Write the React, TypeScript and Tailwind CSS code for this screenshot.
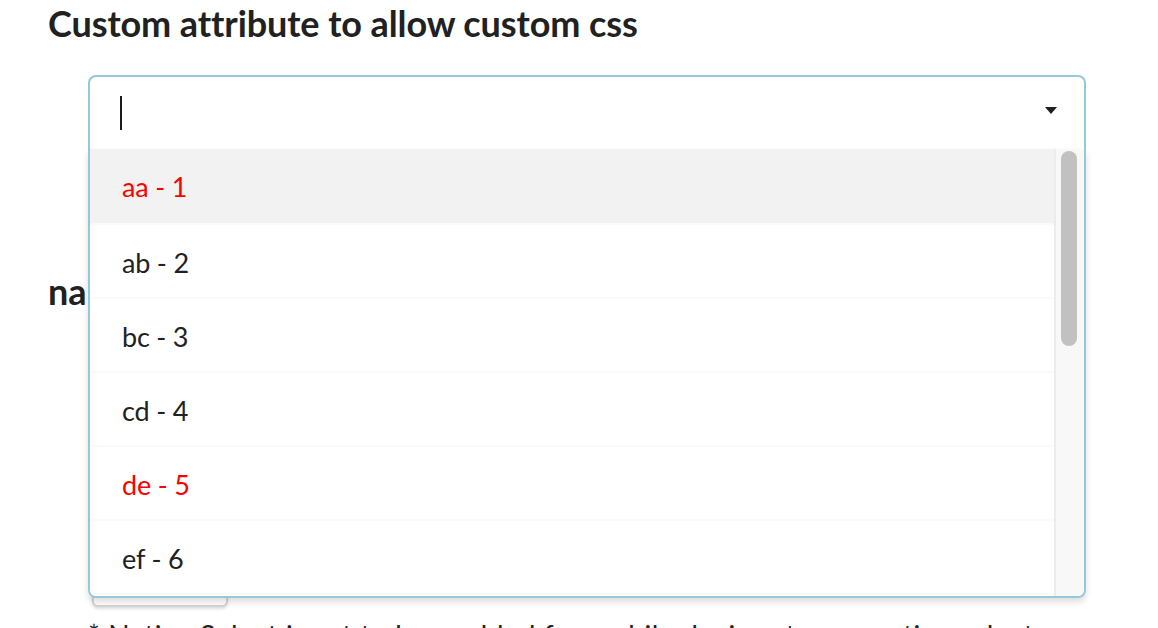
import React from "react";

const options = [
  { label: "aa - 1", red: true },
  { label: "ab - 2", red: false },
  { label: "bc - 3", red: false },
  { label: "cd - 4", red: false },
  { label: "de - 5", red: true },
  { label: "ef - 6", red: false },
  { label: "fg - 7", red: false },
];

export default function App() {
  return (
    <div
      className="min-h-screen w-full bg-white pl-[48px] text-[#212121] overflow-hidden"
      style={{ fontFamily: "Lato, 'Open Sans', sans-serif" }}
    >
      <h3 className="m-0 text-[36px] font-bold leading-[46px] tracking-[-0.1px]">
        Custom attribute to allow custom css
      </h3>

      <div className="relative z-10 ml-[40px] mt-[29px] w-[998px]">
        <div className="relative h-[74px] rounded-t-[8px] border-2 border-b-0 border-[#96c8da] bg-white">
          <div className="absolute left-[30px] top-[19px] h-[34px] w-[2px] bg-[#1a1a1a]" />
          <svg
            className="absolute right-[27px] top-[30px]"
            width="12"
            height="7"
            viewBox="0 0 12 7"
          >
            <polygon points="0,0 12,0 6,7" fill="#1f1f1f" />
          </svg>
        </div>
        <div className="absolute left-0 right-0 top-full flex h-[449px] overflow-hidden rounded-b-[8px] border-2 border-t-0 border-[#96c8da] bg-white shadow-[0_4px_6px_0_rgba(34,36,38,0.15)]">
          <div className="flex-1 overflow-hidden">
            {options.map((o, i) => (
              <div
                key={o.label}
                className={`h-[74px] px-[32px] pt-[24px] text-[27px] leading-[28px] tracking-[-0.2px] ${
                  i === 0 ? "bg-[#f2f2f2]" : "border-t-2 border-[#fafafa] bg-white"
                } ${o.red ? "text-[#ff0000]" : "text-[#212121]"}`}
              >
                {o.label}
              </div>
            ))}
          </div>
          <div className="w-[30px] shrink-0 border-l-2 border-[#ececec] bg-[#f8f8f8] pl-[5px] pt-[2px]">
            <div className="h-[195px] w-[16px] rounded-full bg-[#c1c1c1]" />
          </div>
        </div>
      </div>

      <div className="mt-[119px] text-[36px] font-bold leading-[46px]">name</div>

      <div className="ml-[44px] mt-[221px] h-[72px] w-[136px] rounded-[6px] border-2 border-[#d4d4d5] bg-white shadow-[0_2px_3px_0_rgba(34,36,38,0.15)]" />

      <p className="ml-[40px] mt-[9px] whitespace-nowrap text-[28px] leading-[39px] tracking-[0.6px] text-[#212121]">
        * Native Select input to be enabled for mobile devices to use native select
      </p>
    </div>
  );
}
